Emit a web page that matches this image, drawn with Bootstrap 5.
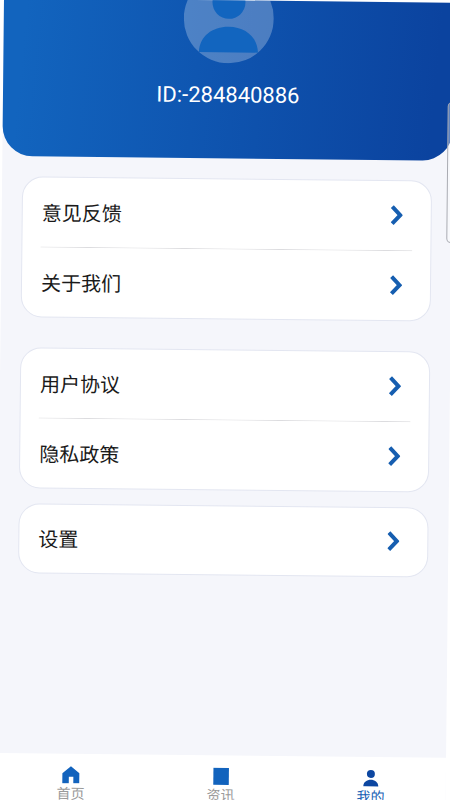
<!DOCTYPE html>
<html lang="zh-CN">
<head>
<meta charset="utf-8">
<meta name="viewport" content="width=device-width, initial-scale=1">
<title>我的</title>
<link href="https://cdn.jsdelivr.net/npm/bootstrap@5.3.0/dist/css/bootstrap.min.css" rel="stylesheet">
<style>
  body { font-family: Roboto, "Noto Sans CJK SC", sans-serif; background: #fff; overflow: hidden; height: 100vh; }
  /* the whole screen is tilted slightly clockwise */
  .screen { min-height: calc(100vh + 14px); background: #f5f6fb; transform: translate(4px, -2px) rotate(.6deg); transform-origin: 0 0; }
  .profile { background: linear-gradient(95deg, #1264be 5%, #0b439f 95%); border-radius: 0 0 30px 30px; height: 158px; overflow: hidden; }
  .avatar { width: 90px; height: 90px; margin-top: -27px; flex: none; }
  .user-id { font-size: 22px; line-height: 28px; margin-top: 18px; }
  .menus { padding: 20px 20px 0; }
  .menu-group { border: 1px solid #e3e6f1; border-radius: 21px; background: #fff; padding: 0 18px; }
  .menu-row { border: 0; height: 69px; padding: 2px 10px 0 1px; color: #1a1a1a; font-size: 20px; line-height: 28px; background: transparent; }
  .menu-row svg { margin-bottom: 4px; }
  .menu-row + .menu-row { border-top: 1px solid #dcdcdf; height: 70px; }
  .gap-wide { margin-top: 30px; }
  .gap-narrow { margin-top: 15px; }
  .single .menu-row { height: 68px; }
  .tabs { height: 59px; padding-top: 12px; background: #fff; }
  .tab-link { color: #9a9a9a; font-size: 14px; line-height: 20px; }
  .tab-link.current { color: #1660b4; }
  .edge-handle { right: -6px; top: 102px; width: 9px; height: 141px; border: 1px solid #a9abb2; border-radius: 5px; background: rgba(255,255,255,.35); transform: rotate(.6deg); }
</style>
</head>
<body>
<div class="screen d-flex flex-column w-100">
  <header class="profile d-flex flex-column align-items-center text-white">
    <svg class="avatar" viewBox="0 0 90 90" role="img" aria-label="头像">
      <circle cx="45" cy="45" r="45" fill="#fff" fill-opacity=".26"/>
      <circle cx="45" cy="29" r="16.500" fill="#1265bf"/>
      <path d="M15.500 79C16 63 29 53.500 45 53.500S74 63 74.500 79Z" fill="#1265bf"/>
    </svg>
    <div class="user-id">ID:-284840886</div>
  </header>

  <main class="menus flex-grow-1">
    <div class="list-group menu-group">
      <a href="#" class="list-group-item menu-row d-flex align-items-center justify-content-between">意见反馈
        <svg width="12" height="20" viewBox="0 0 12 20"><path d="M1.500 1.500L9.500 10L1.500 18.500" fill="none" stroke="#165eb0" stroke-width="4"/></svg></a>
      <a href="#" class="list-group-item menu-row d-flex align-items-center justify-content-between">关于我们
        <svg width="12" height="20" viewBox="0 0 12 20"><path d="M1.500 1.500L9.500 10L1.500 18.500" fill="none" stroke="#165eb0" stroke-width="4"/></svg></a>
    </div>
    <div class="list-group menu-group gap-wide">
      <a href="#" class="list-group-item menu-row d-flex align-items-center justify-content-between">用户协议
        <svg width="12" height="20" viewBox="0 0 12 20"><path d="M1.500 1.500L9.500 10L1.500 18.500" fill="none" stroke="#165eb0" stroke-width="4"/></svg></a>
      <a href="#" class="list-group-item menu-row d-flex align-items-center justify-content-between">隐私政策
        <svg width="12" height="20" viewBox="0 0 12 20"><path d="M1.500 1.500L9.500 10L1.500 18.500" fill="none" stroke="#165eb0" stroke-width="4"/></svg></a>
    </div>
    <div class="list-group menu-group single gap-narrow">
      <a href="#" class="list-group-item menu-row d-flex align-items-center justify-content-between">设置
        <svg width="12" height="20" viewBox="0 0 12 20"><path d="M1.500 1.500L9.500 10L1.500 18.500" fill="none" stroke="#165eb0" stroke-width="4"/></svg></a>
    </div>
  </main>

  <nav class="tabs d-flex align-items-start" aria-label="主导航">
    <a href="#" class="tab-link d-flex flex-column align-items-center text-decoration-none w-100">
      <svg width="18" height="18" viewBox="0 0 18 18"><path d="M9 .500L17.500 7.500V17.500H11.500V11H7V17.500H.500V7.500Z" fill="#1263bd"/></svg>
      <span>首页</span></a>
    <a href="#" class="tab-link d-flex flex-column align-items-center text-decoration-none w-100">
      <svg width="18" height="18" viewBox="0 0 18 18"><path d="M1.500 .500H17V17.500H1.500Z" fill="#1263bd"/></svg>
      <span>资讯</span></a>
    <a href="#" class="tab-link current d-flex flex-column align-items-center text-decoration-none w-100" aria-current="page">
      <svg width="18" height="18" viewBox="0 0 18 18"><circle cx="9" cy="5" r="4" fill="#0d47a1"/><path d="M1.500 17.500C1.500 8.500 16.500 8.500 16.500 17.500Z" fill="#0d47a1"/></svg>
      <span>我的</span></a>
  </nav>
</div>
<div class="edge-handle position-absolute"></div>
<script src="https://cdn.jsdelivr.net/npm/bootstrap@5.3.0/dist/js/bootstrap.bundle.min.js"></script>
</body>
</html>
